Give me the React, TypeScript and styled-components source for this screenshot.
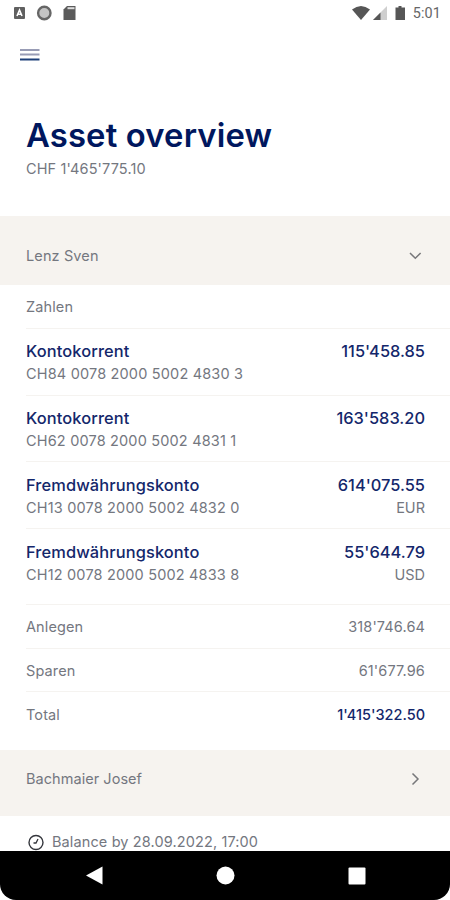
import React from "react";
import styled, { createGlobalStyle } from "styled-components";

const NAVY = "#14276b";
const GREY = "#74777f";

const GlobalStyle = createGlobalStyle`
  * { box-sizing: border-box; }
  body { margin: 0; background: #fff; font-family: Inter, "Liberation Sans", sans-serif; }
`;

const Screen = styled.div`
  width: 450px;
  height: 900px;
  overflow: hidden;
  display: flex;
  flex-direction: column;
  background: #fff;
`;

const StatusBar = styled.header`
  height: 27px;
  flex: none;
  display: flex;
  justify-content: space-between;
  padding: 0 9px 0 10px;
`;

const Clock = styled.span`
  font: 400 14.4px/27px Roboto, sans-serif;
  color: #666;
  letter-spacing: 0.1px;
  margin-left: 6px;
`;

const StatusGroup = styled.div`
  display: flex;
`;

const MenuButton = styled.button`
  width: 20px;
  height: 14px;
  flex: none;
  margin: 21px 0 0 20px;
  padding: 0;
  border: 0;
  background: none;
  display: flex;
`;

const Heading = styled.section`
  height: 154px;
  flex: none;
  padding: 52px 26px 0;
`;

const Title = styled.h1`
  margin: 0 0 1px;
  font-size: 32.8px;
  line-height: 43px;
  font-weight: 600;
  letter-spacing: 0.15px;
  color: #00175e;
`;

const Text = styled.span<{ $track?: number; $navy?: boolean }>`
  display: block;
  white-space: nowrap;
  font-size: 14.5px;
  line-height: 22px;
  font-weight: ${(p) => (p.$navy ? 500 : 400)};
  letter-spacing: ${(p) => p.$track ?? 0.12}px;
  color: ${(p) => (p.$navy ? NAVY : GREY)};
`;

const Strong = styled(Text)`
  font-size: 16.4px;
  line-height: 23px;
  font-weight: 500;
  letter-spacing: ${(p) => p.$track ?? 0.12}px;
  color: ${NAVY};
`;

const Person = styled.section<{ $height: number; $top: number }>`
  height: ${(p) => p.$height}px;
  flex: none;
  padding: ${(p) => p.$top}px 24px 0 26px;
  display: flex;
  justify-content: space-between;
  background: #f6f3ef;
`;

const List = styled.main`
  flex: none;
  padding-left: 26px;
`;

const Row = styled.div<{ $height: number; $top: number; $last?: boolean }>`
  height: ${(p) => p.$height}px;
  padding: ${(p) => p.$top}px 25px 0 0;
  display: flex;
  justify-content: space-between;
  border-bottom: ${(p) => (p.$last ? 0 : 1)}px solid #f5f3f0;
`;

const Column = styled.div<{ $end?: boolean }>`
  display: flex;
  flex-direction: column;
  align-items: ${(p) => (p.$end ? "flex-end" : "flex-start")};
`;

const Balance = styled.section`
  height: 35px;
  flex: none;
  overflow: hidden;
  display: flex;
  gap: 8px;
  padding: 15px 0 0 28px;
`;

const NavBar = styled.footer`
  height: 49px;
  flex: none;
  background: #000;
  border-radius: 0 0 16px 16px;
`;

const accounts = [
  { name: "Kontokorrent", iban: "CH84 0078 2000 5002 4830 3", amount: "115'458.85", height: 67, top: 11 },
  { name: "Kontokorrent", iban: "CH62 0078 2000 5002 4831 1", amount: "163'583.20", height: 66, top: 11 },
  { name: "Fremdwährungskonto", iban: "CH13 0078 2000 5002 4832 0", amount: "614'075.55", currency: "EUR", height: 67, top: 12 },
  { name: "Fremdwährungskonto", iban: "CH12 0078 2000 5002 4833 8", amount: "55'644.79", currency: "USD", height: 76, top: 12 },
];

const StatusLeft = () => (
  <svg width="70" height="27">
    <rect x="4" y="7" width="11" height="12" rx="1" fill="#606060" />
    <path d="M7 16 9.500 10l2.500 6M8 14.300h3" fill="none" stroke="#fff" strokeWidth="1.600" />
    <circle cx="34.300" cy="13" r="6.200" fill="#c4c4c4" stroke="#666" strokeWidth="2.400" />
    <path d="M57 6h8.500v14H53.500V9.500z" fill="#5b5b5b" />
    <path d="M57.500 8.200h7" stroke="#ddd" strokeWidth="2" />
  </svg>
);

const StatusRight = () => (
  <svg width="56" height="27">
    <path d="M1 9.500Q10 2.500 19 9.500L10 20z" fill="#565656" />
    <path d="M36 6v14H22z" fill="#cfcfcf" />
    <path d="M29.500 12.500V20H22z" fill="#565656" />
    <path d="M47.500 6h3v1.500H54V20h-9.500V7.500h3z" fill="#565656" />
  </svg>
);

export default function App() {
  return (
    <>
      <GlobalStyle />
      <Screen>
        <StatusBar>
          <StatusLeft />
          <StatusGroup>
            <StatusRight />
            <Clock>5:01</Clock>
          </StatusGroup>
        </StatusBar>
        <MenuButton aria-label="Menu">
          <svg width="20" height="14">
            <path d="M0 2h19.500M0 6.600h19.500" stroke="#989cb5" strokeWidth="2" />
            <path d="M0 11.500h19.500" stroke="#1d3f78" strokeWidth="2" />
          </svg>
        </MenuButton>
        <Heading>
          <Title>Asset overview</Title>
          <Text>CHF 1'465'775.10</Text>
        </Heading>
        <Person $height={69} $top={29}>
          <Text>Lenz Sven</Text>
          <svg width="22" height="22" fill="none" stroke="#77777a" strokeWidth="1.500">
            <path d="m6 8 5.300 5.300L16.600 8" />
          </svg>
        </Person>
        <List>
          <Row $height={44} $top={11}>
            <Text>Zahlen</Text>
          </Row>
          {accounts.map((a) => (
            <Row key={a.iban} $height={a.height} $top={a.top}>
              <Column>
                <Strong>{a.name}</Strong>
                <Text $track={0.17}>{a.iban}</Text>
              </Column>
              <Column $end>
                <Strong $track={0}>{a.amount}</Strong>
                {a.currency && <Text $track={0}>{a.currency}</Text>}
              </Column>
            </Row>
          ))}
          <Row $height={44} $top={11}>
            <Text>Anlegen</Text>
            <Text>318'746.64</Text>
          </Row>
          <Row $height={43} $top={11}>
            <Text>Sparen</Text>
            <Text>61'677.96</Text>
          </Row>
          <Row $height={58} $top={12} $last>
            <Text>Total</Text>
            <Text $navy $track={0}>1'415'322.50</Text>
          </Row>
        </List>
        <Person $height={66} $top={18}>
          <Text $track={0.05}>Bachmaier Josef</Text>
          <svg width="22" height="22" fill="none" stroke="#77777a" strokeWidth="1.500">
            <path d="m8.500 5.500 5.500 5.500L8.500 16.500" />
          </svg>
        </Person>
        <Balance>
          <svg width="16" height="22" fill="none" stroke="#34363c">
            <circle cx="8" cy="11.500" r="7" strokeWidth="1.400" />
            <path d="M10 8 8 12H5.500" strokeWidth="1.300" />
          </svg>
          <Text>Balance by 28.09.2022, 17:00</Text>
        </Balance>
        <NavBar>
          <svg width="450" height="49" fill="#fff">
            <path d="M86 24.500 102.500 15.500V33.500z" />
            <circle cx="225.500" cy="24.500" r="9" />
            <rect x="348.500" y="16.500" width="17" height="17" rx="1" />
          </svg>
        </NavBar>
      </Screen>
    </>
  );
}
